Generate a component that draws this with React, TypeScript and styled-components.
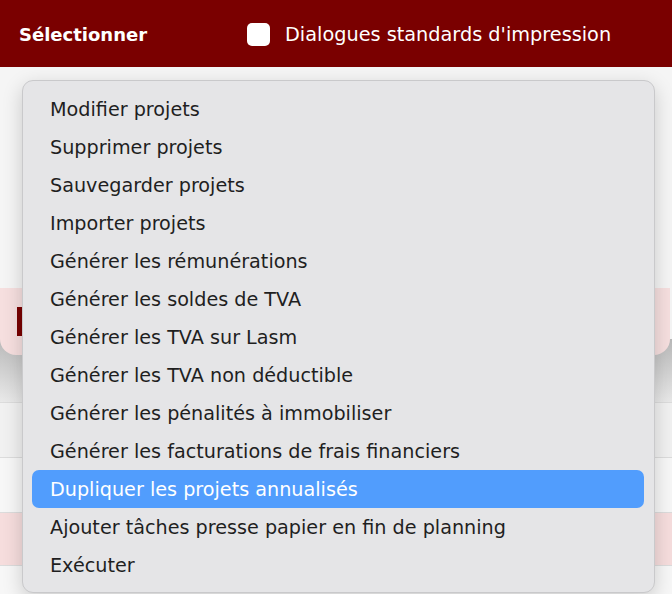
import React from "react";
import styled, { createGlobalStyle } from "styled-components";

const Global = createGlobalStyle`
  html, body { margin: 0; padding: 0; }
  body { width: 672px; height: 594px; overflow: hidden; background: #f5f5f5;
    font-family: "DejaVu Sans", "Liberation Sans", sans-serif; }
`;

const Page = styled.div`
  position: relative;
  width: 672px;
  height: 594px;
  display: flex;
  flex-direction: column;
  overflow: hidden;
  & > * { flex-shrink: 0; }
`;

const Header = styled.header`
  height: 67px;
  background: #7a0000;
  display: flex;
  align-items: center;
  padding: 2px 0 0 19px;
  box-sizing: border-box;
  color: #fff;
`;

const Title = styled.span`
  font-weight: bold;
  font-size: 18px;
  width: 228px;
`;

const Check = styled.span`
  width: 23px;
  height: 23px;
  background: #fff;
  border-radius: 5px;
  margin-right: 15px;
`;

const Label = styled.span`
  font-size: 19.3px;
`;

const Upper = styled.div`
  height: 221px;
  background: #f5f5f5;
`;

const Card = styled.div`
  height: 67px;
  width: 670px;
  background: #f6dfdf;
  border-radius: 0 0 16px 16px;
  display: flex;
  align-items: center;
  padding-left: 17px;
  box-sizing: border-box;
  position: relative;
  z-index: 1;
`;

const Marker = styled.span`
  width: 5px;
  height: 29px;
  background: #7a0000;
`;

const Shade = styled.div`
  height: 47px;
  margin-top: -16px;
  padding-top: 16px;
  background: linear-gradient(#b9b9b9, #e9e9e9);
  border-bottom: 1px solid #dcdcdc;
`;

const Row = styled.div<{ $tone: "grey" | "white" | "pink" }>`
  height: ${(p) => (p.$tone === "pink" ? 52 : 54)}px;
  background: ${(p) =>
    p.$tone === "pink" ? "#f6dddd" : p.$tone === "grey" ? "#f1f1f1" : "#f7f7f7"};
  border-bottom: 1px solid #dcdcdc;
`;

const Menu = styled.div`
  position: absolute;
  left: 22px;
  top: 80px;
  width: 633px;
  height: 513px;
  box-sizing: border-box;
  background: #e5e5e7;
  border: 1px solid #c9c9cb;
  border-radius: 11px;
  box-shadow: 0 6px 20px rgba(0, 0, 0, 0.18);
  padding: 9px 10px 9px 9px;
  display: flex;
  flex-direction: column;
  z-index: 5;
`;

const Item = styled.div<{ $active?: boolean }>`
  height: 38px;
  flex: none;
  display: flex;
  align-items: center;
  padding-left: 18px;
  border-radius: 7px;
  font-size: 19.2px;
  color: ${(p) => (p.$active ? "#fff" : "#1f1f1f")};
  background: ${(p) => (p.$active ? "#519dfd" : "transparent")};
`;

const items = [
  "Modifier projets",
  "Supprimer projets",
  "Sauvegarder projets",
  "Importer projets",
  "Générer les rémunérations",
  "Générer les soldes de TVA",
  "Générer les TVA sur Lasm",
  "Générer les TVA non déductible",
  "Générer les pénalités à immobiliser",
  "Générer les facturations de frais financiers",
  "Dupliquer les projets annualisés",
  "Ajouter tâches presse papier en fin de planning",
  "Exécuter",
];

export default function App() {
  return (
    <Page>
      <Global />
      <Header>
        <Title>Sélectionner</Title>
        <Check />
        <Label>Dialogues standards d'impression</Label>
      </Header>
      <Upper />
      <Card>
        <Marker />
      </Card>
      <Shade />
      <Row $tone="grey" />
      <Row $tone="white" />
      <Row $tone="pink" />
      <Row $tone="white" />
      <Menu>
        {items.map((t) => (
          <Item key={t} $active={t.startsWith("Dupliquer")}>
            {t}
          </Item>
        ))}
      </Menu>
    </Page>
  );
}
